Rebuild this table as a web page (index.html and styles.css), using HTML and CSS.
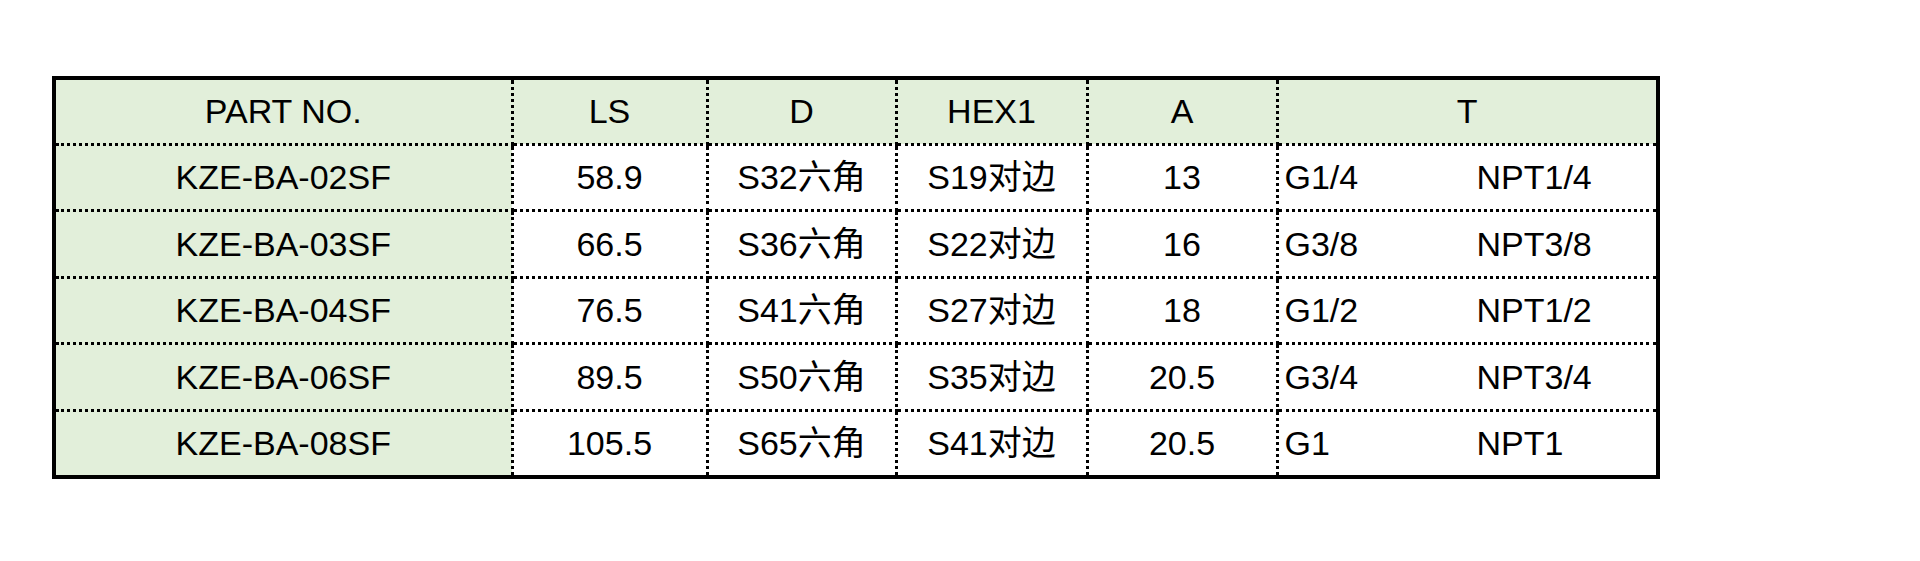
FILE: index.html
```html
<!DOCTYPE html>
<html lang="zh">
<head>
<meta charset="utf-8">
<title>KZE-BA</title>
<link rel="stylesheet" href="styles.css">
</head>
<body>
<table class="spec">
  <colgroup>
    <col class="c-part">
    <col class="c-ls">
    <col class="c-d">
    <col class="c-hex">
    <col class="c-a">
    <col class="c-t">
  </colgroup>
  <thead>
    <tr class="head">
      <th>PART NO.</th>
      <th>LS</th>
      <th>D</th>
      <th>HEX1</th>
      <th>A</th>
      <th>T</th>
    </tr>
  </thead>
  <tbody>
    <tr>
      <td class="part">KZE-BA-02SF</td>
      <td>58.9</td>
      <td>S32六角</td>
      <td>S19对边</td>
      <td>13</td>
      <td class="thread"><div class="tpair"><span>G1/4</span><span>NPT1/4</span></div></td>
    </tr>
    <tr>
      <td class="part">KZE-BA-03SF</td>
      <td>66.5</td>
      <td>S36六角</td>
      <td>S22对边</td>
      <td>16</td>
      <td class="thread"><div class="tpair"><span>G3/8</span><span>NPT3/8</span></div></td>
    </tr>
    <tr>
      <td class="part">KZE-BA-04SF</td>
      <td>76.5</td>
      <td>S41六角</td>
      <td>S27对边</td>
      <td>18</td>
      <td class="thread"><div class="tpair"><span>G1/2</span><span>NPT1/2</span></div></td>
    </tr>
    <tr>
      <td class="part">KZE-BA-06SF</td>
      <td>89.5</td>
      <td>S50六角</td>
      <td>S35对边</td>
      <td>20.5</td>
      <td class="thread"><div class="tpair"><span>G3/4</span><span>NPT3/4</span></div></td>
    </tr>
    <tr>
      <td class="part">KZE-BA-08SF</td>
      <td>105.5</td>
      <td>S65六角</td>
      <td>S41对边</td>
      <td>20.5</td>
      <td class="thread"><div class="tpair"><span>G1</span><span>NPT1</span></div></td>
    </tr>
  </tbody>
</table>
</body>
</html>
```
FILE: styles.css
```css
html, body {
  margin: 0;
  padding: 0;
  background: #ffffff;
}

body {
  padding: 76px 0 0 52px;
  font-family: "Liberation Sans", Arial, "Noto Sans CJK SC", sans-serif;
  color: #000000;
}

.spec {
  border-collapse: collapse;
  table-layout: fixed;
  width: 1608px;
  border: 4px solid #000000;
  font-size: 34px;
  line-height: 1;
}

.c-part { width: 458px; }
.c-ls { width: 195px; }
.c-d { width: 189px; }
.c-hex { width: 191px; }
.c-a { width: 190px; }
.c-t { width: 381px; }

.spec tr {
  height: 66px;
}

.spec tbody tr {
  height: 66.6px;
}

.spec th,
.spec td {
  border: 3px dotted #000000;
  padding: 0;
  text-align: center;
  vertical-align: middle;
  font-weight: normal;
  white-space: nowrap;
}

.head th {
  background: #e2efda;
}

.part {
  background: #e2efda;
}

.spec td.thread {
  text-align: left;
  padding-left: 6px;
}

.tpair {
  display: grid;
  grid-template-columns: 192px auto;
}
```
